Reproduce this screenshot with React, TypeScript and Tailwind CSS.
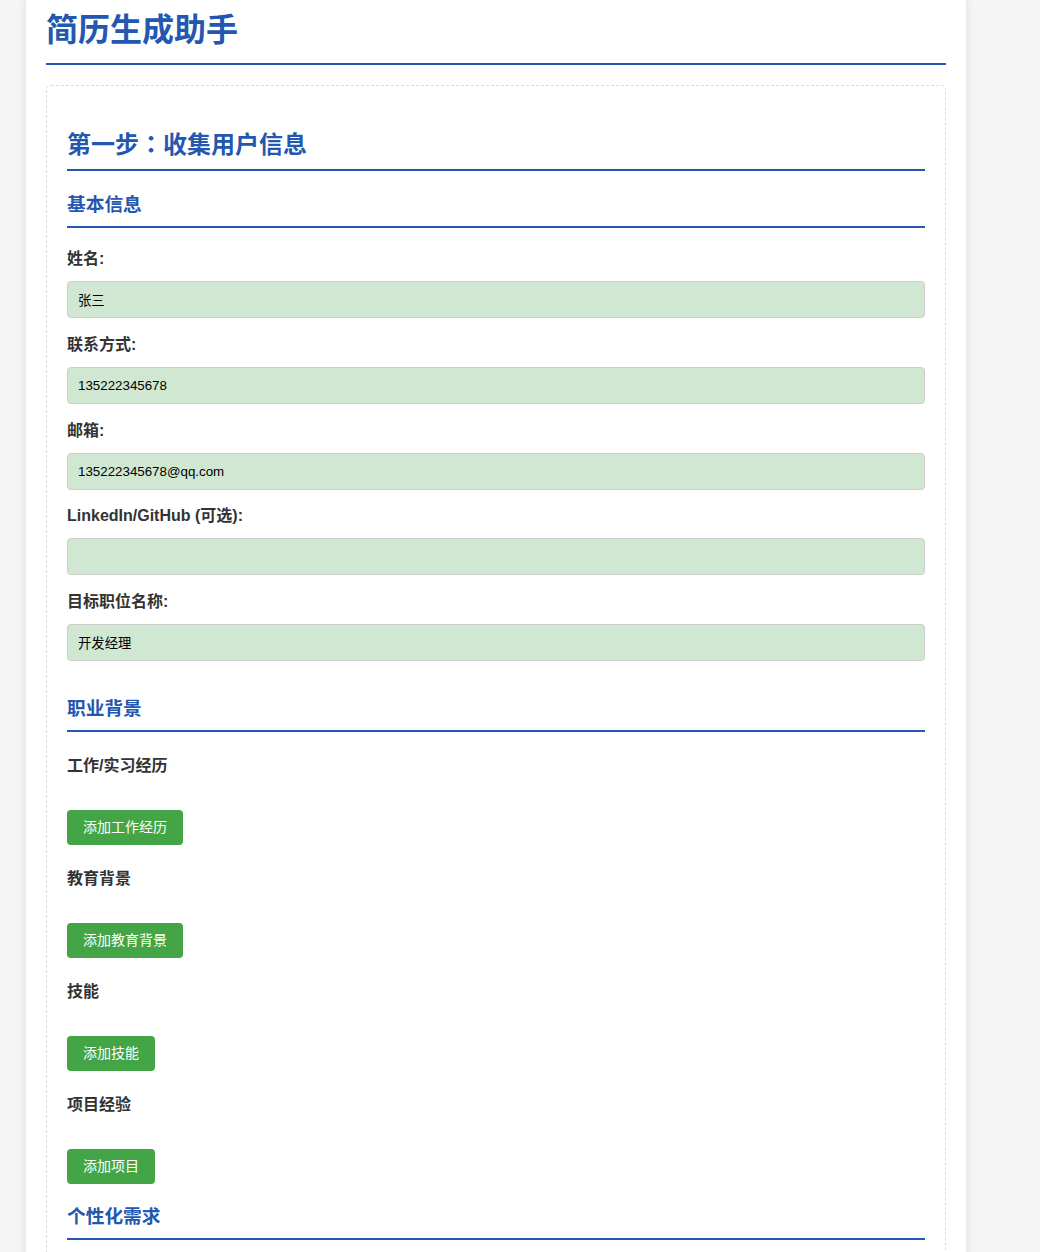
import React from "react";

const fontStack = '"Liberation Sans", "Noto Sans CJK SC", sans-serif';

function Field({ label, value }: { label: string; value: string }) {
  return (
    <div className="mb-[14.75px]">
      <label className="block text-[16px] leading-[24px] font-bold text-[#333] mb-[10px]">{label}</label>
      <input
        type="text"
        defaultValue={value}
        className="block w-full h-[37px] px-[10px] border border-[#cccccc] rounded-[4px] bg-[#d0e8d1] text-[13.33px] text-black outline-none"
        style={{ fontFamily: fontStack }}
      />
    </div>
  );
}

function SubSection({ title, button }: { title: string; button: string }) {
  return (
    <>
      <h4 className="mt-[22px] mb-[32px] text-[16px] leading-[24px] font-bold text-[#333]">{title}</h4>
      <div>
        <button
          type="button"
          className="h-[35px] px-4 text-[14px] leading-[35px] text-white rounded-[4px] bg-[#43a546]"
          style={{ fontFamily: fontStack }}
        >
          {button}
        </button>
      </div>
    </>
  );
}

export default function App() {
  return (
    <div className="min-h-screen bg-[#f4f5f4]" style={{ fontFamily: fontStack }}>
      <div className="ml-[26px] w-[940px] min-h-screen bg-white px-5 pt-[11px] pb-10 shadow-[0_0_10px_rgba(0,0,0,0.1)]">
        <h1 className="text-[32px] leading-[38px] font-bold text-[#2357b0] pb-[14px] border-b-2 border-[#2357b0] mb-[20px]">
          简历生成助手
        </h1>
        <div className="border border-dashed border-[#dddddd] rounded-[5px] p-[20px]">
          <h2 className="mt-[25px] text-[24px] leading-[28px] font-bold text-[#2357b0] pb-[10px] border-b-2 border-[#2357b0] mb-[22px]">
            第一步<span style={{ fontFamily: '"Liberation Sans", "Noto Sans CJK JP", sans-serif' }}>：</span>收集用户信息
          </h2>

          <h3 className="text-[18.72px] leading-[24px] font-bold text-[#2357b0] pb-[9px] border-b-2 border-[#2357b0] mb-[19px]">
            基本信息
          </h3>
          <div className="flow-root">
            <Field label="姓名:" value="张三" />
            <Field label="联系方式:" value="135222345678" />
            <Field label="邮箱:" value="135222345678@qq.com" />
            <Field label="LinkedIn/GitHub (可选):" value="" />
            <Field label="目标职位名称:" value="开发经理" />
          </div>

          <h3 className="mt-[21px] text-[18.72px] leading-[24px] font-bold text-[#2357b0] pb-[9px] border-b-2 border-[#2357b0] mb-[19px]">
            职业背景
          </h3>
          <SubSection title="工作/实习经历" button="添加工作经历" />
          <SubSection title="教育背景" button="添加教育背景" />
          <SubSection title="技能" button="添加技能" />
          <SubSection title="项目经验" button="添加项目" />

          <h3 className="mt-[21px] text-[18.72px] leading-[24px] font-bold text-[#2357b0] pb-[9px] border-b-2 border-[#2357b0] mb-[19px]">
            个性化需求
          </h3>
          <div className="h-[200px]" />
        </div>
      </div>
    </div>
  );
}
